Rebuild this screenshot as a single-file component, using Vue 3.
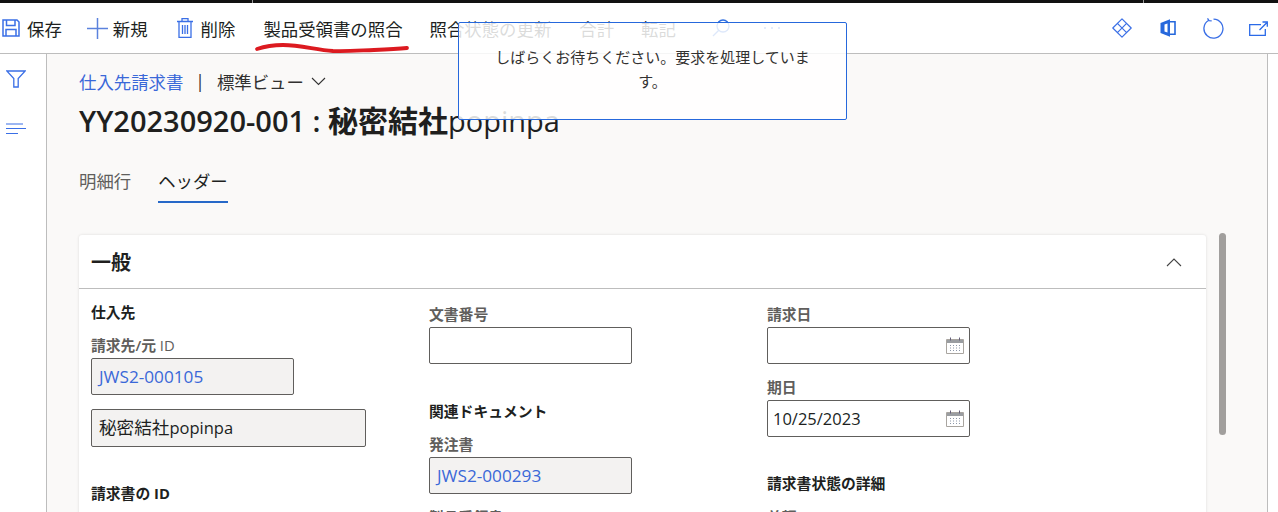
<template>
  <div class="page">
    <div class="topbar"><i class="tick t1"></i><i class="tick t2"></i></div>
    <header class="toolbar">
      <div class="tools">
        <button class="tool save">
          <svg width="18" height="18" viewBox="0 0 18 18" fill="none" stroke="#3a6fe6" stroke-width="1.500"><path d="M1 1h14l2 2v14H1z"/><path d="M4.500 1v5.500h8.500V1M4 17v-6.500h10V17"/></svg>
          <span>保存</span>
        </button>
        <button class="tool add">
          <svg width="21" height="21" viewBox="0 0 21 21" fill="none" stroke="#5b82dd" stroke-width="1.500"><path d="M10.500 0v21M0 10.500h21"/></svg>
          <span>新規</span>
        </button>
        <button class="tool del">
          <svg width="16" height="20" viewBox="0 0 16 20" fill="none" stroke="#3a6fe6" stroke-width="1.300"><path d="M0 3.500h16M5 3.500V.7h6v2.800M2 3.500v15.800h12V3.500M5.500 7v9M8 7v9M10.500 7v9"/></svg>
          <span>削除</span>
        </button>
        <button class="tool text m28">製品受領書の照合</button>
        <button class="tool text">照合状態の更新</button>
        <button class="tool text m28">合計</button>
        <button class="tool text">転記</button>
        <svg class="search" width="18" height="18" viewBox="0 0 18 18" fill="none" stroke="#2f6fe0" stroke-width="1.300"><circle cx="11" cy="7" r="6"/><path d="M6.800 11.200 1 17"/></svg>
        <svg class="more" width="18" height="4" viewBox="0 0 18 4" fill="#2f6fe0"><circle cx="2" cy="2" r="1.100"/><circle cx="9" cy="2" r="1.100"/><circle cx="16" cy="2" r="1.100"/></svg>
      </div>
      <div class="right-tools">
        <svg width="20" height="20" viewBox="0 0 20 20" fill="none" stroke="#3a6fe6" stroke-width="1.200" stroke-linejoin="round"><path d="M10 .8 19.200 10 10 19.200 .8 10zM5.400 5.400l9.200 9.200M14.600 5.400l-9.200 9.200"/></svg>
        <svg class="office" width="16" height="18" viewBox="0 0 16 18"><path d="M.5 4 10 .3v17.400L.5 14z" fill="#2668dc"/><path d="M10 2.800h5v12.400h-5" fill="none" stroke="#2668dc" stroke-width="1.600"/><path d="M4.500 5.500l3-1v9l-3-1z" fill="#fff"/></svg>
        <svg class="refresh" width="21" height="21" viewBox="0 0 21 21" fill="none" stroke="#3a6fe6" stroke-width="1.300"><path d="M5.800 2.300a9.500 9.500 0 1 0 4.700-1.200"/><path d="M4.500.4l1.500 2.300 2.700.2"/></svg>
        <svg class="open" width="19" height="15" viewBox="0 0 19 15" fill="none" stroke="#2a6ae8" stroke-width="1.300"><path d="M12 3.600H.7v10.700h15.600V8"/><path d="M10.500 9l7-7M13.500 1h4.800v4.800"/></svg>
      </div>
    </header>

    <div class="body">
      <aside class="rail">
        <svg width="20" height="18" viewBox="0 0 20 18" fill="none" stroke="#3a6fe6" stroke-width="1.300"><path d="M.8 1h18.400l-7 7.500V17H7.800V8.500z"/></svg>
        <svg width="20" height="12" viewBox="0 0 20 12" fill="none" stroke="#3a6fe6" stroke-width="1.100"><path d="M0 1h17M0 5.500h20M0 10.500h12"/></svg>
      </aside>

      <main class="main">
        <div class="crumbs">
          <span class="link">仕入先請求書</span>
          <span class="sep">|</span>
          <span>標準ビュー</span>
          <svg width="15" height="9" viewBox="0 0 15 9" fill="none" stroke="#333" stroke-width="1.100"><path d="M1 1l6.500 6.500L14 1"/></svg>
        </div>
        <h1 class="title">YY20230920-001 : <b>秘密結社</b><span>popinpa</span></h1>
        <nav class="tabs">
          <span>明細行</span>
          <span class="active">ヘッダー</span>
        </nav>

        <section class="card">
          <div class="card-head">
            <h2>一般</h2>
            <svg width="16" height="10" viewBox="0 0 16 10" fill="none" stroke="#444" stroke-width="1.100"><path d="M1 9l7-7 7 7"/></svg>
          </div>
          <div class="cols">
            <div class="col">
              <h3 class="c1h">仕入先</h3>
              <label class="l1">請求先/元 <span class="thin">ID</span></label>
              <div class="input ro link w203 code">JWS2-000105</div>
              <div class="input ro w274"><span class="cjk">秘密結社</span>popinpa</div>
              <h3 class="c1b">請求書の ID</h3>
            </div>
            <div class="col">
              <label class="l0">文書番号</label>
              <div class="input w203"></div>
              <h3 class="c2h">関連ドキュメント</h3>
              <label class="l2">発注書</label>
              <div class="input ro link w203 code">JWS2-000293</div>
              <label class="l3">製品受領書</label>
            </div>
            <div class="col">
              <label class="l0">請求日</label>
              <div class="input w203 date">
                <span></span>
                <svg class="cal" width="18" height="17" viewBox="0 0 18 17" fill="none"><path d="M.5 2.500h17v14H.5z" stroke="#a9a5a0"/><path d="M1 3h16v3H1z" fill="#9a9da1"/><path d="M4.500 .5v3M13.500 .5v3" stroke="#66607a"/><path d="M4 8.500h10M4 11h10M4 13.500h10" stroke="#8d97a8" stroke-dasharray="1 2"/></svg>
              </div>
              <label class="l4">期日</label>
              <div class="input w203 date">
                <span>10/25/2023</span>
                <svg class="cal" width="18" height="17" viewBox="0 0 18 17" fill="none"><path d="M.5 2.500h17v14H.5z" stroke="#a9a5a0"/><path d="M1 3h16v3H1z" fill="#9a9da1"/><path d="M4.500 .5v3M13.500 .5v3" stroke="#66607a"/><path d="M4 8.500h10M4 11h10M4 13.500h10" stroke="#8d97a8" stroke-dasharray="1 2"/></svg>
              </div>
              <h3 class="c3h">請求書状態の詳細</h3>
              <label class="l5">差額</label>
            </div>
          </div>
        </section>
        <div class="scrollbar"></div>
      </main>
      <aside class="right-rail"></aside>
    </div>

    <svg class="scribble" width="160" height="16" viewBox="0 0 160 16" fill="none"><path d="M3 9C12 6 20 5 29 5C47 5 62 10 79 11C93 11.500 106 10.500 120 10C132 9.500 143 9 153 8" stroke="#dc1a20" stroke-width="3.800" stroke-linecap="round"/></svg>

    <div class="wait">
      <p>しばらくお待ちください。要求を処理していま<br>す。</p>
    </div>
  </div>
</template>

<script setup>
</script>

<style>
html, body { margin: 0; background: #fff; }
</style>

<style scoped>
.page {
  position: relative;
  width: 1278px;
  height: 512px;
  overflow: hidden;
  background: #fff;
  color: #201f1e;
  font-family: "Open Sans", "Noto Sans CJK JP", sans-serif;
  font-size: 17.400px;
}
.topbar { position: relative; height: 3px; background: #111; }
.tick { position: absolute; top: 0; width: 1px; height: 3px; background: #999; }
.t1 { left: 252px; }
.t2 { left: 1143px; }
.toolbar {
  height: 51px;
  box-sizing: border-box;
  border-bottom: 1px solid #bdbdbd;
  display: flex;
  justify-content: space-between;
  align-items: center;
}
.tools { display: flex; align-items: center; }
.tool {
  display: flex;
  align-items: center;
  border: 0;
  padding: 0;
  background: none;
  font: inherit;
  color: #201f1e;
  margin-left: 27px;
}
.save { margin-left: 2px; gap: 7px; }
.add { margin-left: 25px; gap: 5px; }
.del { margin-left: 29px; gap: 8px; }
.tool.m28 { margin-left: 28px; }
.search { margin-left: 36px; }
.more { margin-left: 33px; }
.right-tools { display: flex; align-items: center; padding-right: 10px; }
.office { margin-left: 28px; }
.refresh { margin-left: 27px; }
.open { margin-left: 25px; }
.body { display: flex; height: 458px; }
.rail {
  width: 47px;
  box-sizing: border-box;
  border-right: 1px solid #bdbdbd;
  display: flex;
  flex-direction: column;
  align-items: flex-start;
  gap: 35px;
  padding: 16px 0 0 6px;
}
.main {
  position: relative;
  width: 1220px;
  box-sizing: border-box;
  background: #faf9f8;
  padding: 12px 0 0 32px;
}
.right-rail {
  flex: 1;
  background: #fff;
  border-left: 1px solid #bdbdbd;
}
.crumbs {
  display: flex;
  align-items: center;
  height: 30px;
  color: #323130;
}
.crumbs svg { margin-left: 7px; }
.sep { margin: 0 12px; }
.link { color: #3a68d8; }
.title {
  margin: 3px 0 0;
  height: 44px;
  line-height: 44px;
  font-size: 29px;
  font-weight: 600;
  white-space: nowrap;
}
.title b { font-size: 30px; font-weight: 700; }
.title span { font-weight: 400; }
.tabs {
  display: flex;
  gap: 27px;
  margin-top: 23px;
  height: 37px;
  color: #605e5c;
}
.tabs span { box-sizing: border-box; height: 37px; line-height: 30px; }
.tabs .active { color: #201f1e; border-bottom: 2px solid #2668c8; }
.card {
  margin-top: 32px;
  width: 1127px;
  height: 300px;
  background: #fff;
  border-radius: 3px;
  box-shadow: 0 0 3px rgba(0, 0, 0, .12);
}
.card-head {
  height: 54px;
  box-sizing: border-box;
  border-bottom: 1px solid #bdbdbd;
  display: flex;
  justify-content: space-between;
  align-items: center;
  padding: 0 24px 0 12px;
}
h2 { margin: 0; font-size: 20px; font-weight: 700; }
.cols { display: flex; padding-left: 12px; }
.col { width: 338px; display: flex; flex-direction: column; align-items: flex-start; }
h3, label { display: block; margin: 0; height: 20px; line-height: 20px; font-size: 14.800px; }
h3 { font-weight: 700; color: #201f1e; }
label { font-weight: 600; color: #605e5c; }
.thin { font-weight: 400; }
.input {
  box-sizing: border-box;
  height: 37px;
  line-height: 35px;
  border: 1px solid #605e5c;
  border-radius: 2px;
  padding: 0 7px;
  background: #fff;
  font-size: 16.500px;
}
.ro { background: #f3f2f1; }
.code { font-size: 17.200px; }
.cjk { font-size: 17.600px; }
.w203 { width: 203px; }
.w274 { width: 275px; height: 38px; margin-top: 14px; }
.date { display: flex; justify-content: space-between; align-items: center; padding: 0 5px; }
.c1h { margin-top: 13px; }
.l1 { margin-top: 13px; margin-bottom: 3px; }
.c1b { margin-top: 36px; }
.l0 { margin-top: 15px; margin-bottom: 3px; }
.c2h { margin-top: 37px; }
.l2 { margin-top: 13px; margin-bottom: 3px; }
.l3 { margin-top: 13px; }
.l4 { margin-top: 13px; margin-bottom: 3px; }
.c3h { margin-top: 36px; }
.l5 { margin-top: 14px; }
.scrollbar {
  position: absolute;
  left: 1172px;
  top: 179px;
  width: 7px;
  height: 202px;
  border-radius: 4px;
  background: #a19f9d;
}
.scribble { position: absolute; left: 254px; top: 40px; }
.wait {
  position: absolute;
  left: 458px;
  top: 22px;
  width: 389px;
  height: 98px;
  box-sizing: border-box;
  border: 1px solid #2668dc;
  border-radius: 2px;
  background: rgba(255, 255, 255, .84);
  text-align: center;
  color: #323130;
  font-size: 15px;
}
.wait p { margin: 22px 20px 0; line-height: 24px; white-space: nowrap; }
</style>
